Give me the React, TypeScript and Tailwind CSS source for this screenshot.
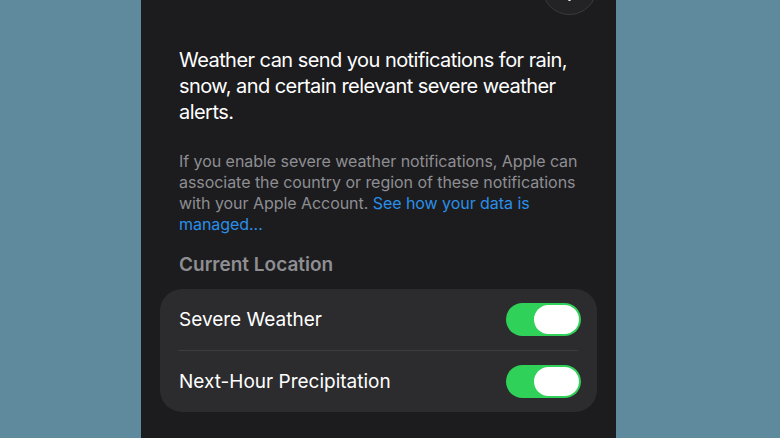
import React from 'react';

const font = { fontFamily: 'Inter, "Noto Sans", sans-serif' };

const Toggle = () => (
  <div className="w-[75px] h-[33px] rounded-full bg-[#30d158] flex items-center justify-end pr-[2px]">
    <div className="w-[45px] h-[29px] rounded-full bg-white" />
  </div>
);

const Row = ({ label }: { label: string }) => (
  <div className="h-[61px] flex items-center justify-between pl-[19px] pr-[16px]">
    <span className="text-[19px] text-white pt-[2px]">{label}</span>
    <Toggle />
  </div>
);

export default function App() {
  return (
    <div className="w-[780px] h-[438px] bg-[#5f8a9e] overflow-hidden" style={font}>
      <div className="relative ml-[141px] w-[475px] h-full bg-[#1c1c1e] px-[19px] pt-[47px]">
        {/* close button, mostly cut off at the top */}
        <div className="absolute left-[401px] top-[-40px] w-[55px] h-[55px] rounded-full bg-[#232325] border border-[#3a3a3c] flex items-end justify-center pb-[13px]">
          <div className="w-[3px] h-[3px] rounded-full bg-white" />
        </div>

        <div className="px-[19px] whitespace-nowrap">
          <p className="text-[20px] leading-[26px] tracking-[-0.55px] text-white">
            Weather can send you notifications for rain,
            <br />
            snow, and certain relevant severe weather
            <br />
            alerts.
          </p>
          <p className="mt-[26px] text-[16px] leading-[21px] tracking-[-0.05px] text-[#8e8e93]">
            If you enable severe weather notifications, Apple can
            <br />
            associate the country or region of these notifications
            <br />
            with your Apple Account. <span className="text-[#2b8fe8]">See how your data is</span>
            <br />
            <span className="text-[#2b8fe8]">managed...</span>
          </p>
          <h2 className="mt-[18px] text-[19px] leading-[24px] font-semibold text-[#8e8e93]">Current Location</h2>
        </div>

        <div className="mt-[12px] rounded-[22px] bg-[#2c2c2e]">
          <Row label="Severe Weather" />
          <div className="ml-[18px] mr-[19px] h-px bg-[#3d3d40]" />
          <Row label="Next-Hour Precipitation" />
        </div>
      </div>
    </div>
  );
}
